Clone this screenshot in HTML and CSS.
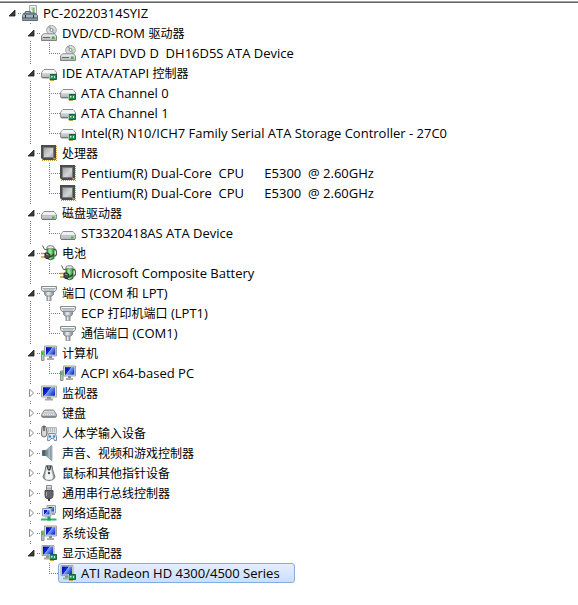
FILE: index.html
```
<!DOCTYPE html>
<html lang="zh-CN">
<head>
<meta charset="utf-8">
<title>设备管理器</title>
<link rel="stylesheet" href="styles.css">
</head>
<body>
<svg class="sprite" aria-hidden="true">
  <defs>
    <linearGradient id="metal" x1="0" y1="0" x2="0" y2="1"><stop offset="0" stop-color="#fafafa"/><stop offset="1" stop-color="#aaadb2"/></linearGradient>
    <linearGradient id="screenFill" x1="0" y1="0" x2="1" y2=".6"><stop offset="0" stop-color="#0008a0"/><stop offset=".48" stop-color="#1428d8"/><stop offset=".52" stop-color="#7ea6f4"/><stop offset="1" stop-color="#1838d8"/></linearGradient>
    <linearGradient id="chipFill" x1="0" y1="0" x2="1" y2="1"><stop offset="0" stop-color="#9c9ea0"/><stop offset=".6" stop-color="#d4d5d6"/><stop offset="1" stop-color="#a6a8aa"/></linearGradient>
    <linearGradient id="side" x1="0" y1="0" x2="1" y2="0"><stop offset="0" stop-color="#7d8288"/><stop offset=".4" stop-color="#eef0f2"/><stop offset="1" stop-color="#838990"/></linearGradient>
    <linearGradient id="cone" x1="0" y1="0" x2="1" y2="0"><stop offset="0" stop-color="#56707c"/><stop offset=".6" stop-color="#b4c2c9"/><stop offset="1" stop-color="#6c808a"/></linearGradient>
    <linearGradient id="green" x1="0" y1="0" x2="1" y2="0"><stop offset="0" stop-color="#22a82e"/><stop offset=".4" stop-color="#9cf59c"/><stop offset="1" stop-color="#1c9c28"/></linearGradient>
  </defs>
  <symbol id="open" viewBox="0 0 8 8"><path d="M7 1V7H1z" fill="#3c3c3c" stroke="#1c1c1c" stroke-width=".8"/></symbol>
  <symbol id="closed" viewBox="0 0 8 8"><path d="M2.500 .2V7.800L6.700 4z" fill="#fff" stroke="#8c8c8c" stroke-width="1"/></symbol>
  <symbol id="computer" viewBox="0 0 16 16">
    <path d="M7.500.5h7v9h-7z" fill="#eef1f2" stroke="#a4a9ac"/><path d="M9 2h4v3H9z" fill="#cfd6d8"/><path d="M10.500 3h2v5h-2z" fill="#7cc455"/>
    <path d="M3.500 8V6.500h5V8" fill="none" stroke="#56636c"/><path d="M2 8h11l2.500 2.500v5H.5v-5z" fill="#70838e" stroke="#5d6f78"/><path d="M1 10h14v2H1z" fill="#a7b7be"/><path d="M3 10h1v3H3zM11 10h1v3h-1z" fill="#28343a"/><path d="M1 14.500h14" stroke="#89989f"/>
  </symbol>
  <symbol id="drive" viewBox="0 0 16 16">
    <path d="M3 6.500h10l2.500 3.500v3.500l-1 1h-13l-1-1V10z" fill="url(#metal)" stroke="#8b8c91"/><path d="M3 7h10l1.800 3H1.200z" fill="#f0f0f2"/><path d="M1 10.500h14" stroke="#bcbec2"/><path d="M11 11.500h2.500v2H11z" fill="#37b928"/><path d="M1 14.500h14" stroke="#74757a"/>
  </symbol>
  <symbol id="optical" viewBox="0 0 16 16">
    <circle cx="10.500" cy="5.200" r="4.800" fill="#dcdde0" stroke="#a0a1a5"/><path d="M10.500 5L7 2l2-1.400zM10.500 5l3.700 3-1.700 1.300z" fill="#9da5ad"/><path d="M10.500 5l4-1.400v2.800z" fill="#b8dfb6"/><circle cx="10.500" cy="5" r="1.500" fill="#fff" stroke="#85868a"/>
    <path d="M2.500 8.800h11l2 2.200v4.500H.5V11z" fill="url(#metal)" stroke="#818287"/><path d="M2 12.500h7" stroke="#64656a"/><path d="M11 11.500h2.500V14H11z" fill="#37b928"/>
  </symbol>
  <symbol id="board" viewBox="0 0 16 16"><path d="M8.500 9.500h7v5h-7z" fill="#23905a" stroke="#17633f"/><path d="M10 11h1.500v1.500H10zM13 11h1v2h-1z" fill="#c9eed7"/><path d="M9 15.500h4" stroke="#c8a52c"/><path d="M8.500 9v6" stroke="#a9c4b4"/></symbol>
  <symbol id="ide" viewBox="0 0 16 16">
    <path d="M3 4.500h10l2.500 3v4.500l-1 1h-13l-1-1V7.500z" fill="url(#metal)" stroke="#8b8c91"/><path d="M3 5h10l2 3H1z" fill="#f4f4f5"/><path d="M1 12.500h8" stroke="#77797e"/><use href="#board"/>
  </symbol>
  <symbol id="chip" viewBox="0 0 16 16">
    <path d="M1 15.500h15M15.500 1v14" stroke="#c89b36" stroke-dasharray="1 1"/><path d="M0 0h15v15H2L0 13z" fill="#4a4c4d"/><path d="M2.500 2.500h10v10h-10z" fill="url(#chipFill)" stroke="#777b7d"/><path d="M12.500 13h2v1.500h-2z" fill="#e0ac3d"/>
  </symbol>
  <symbol id="battery" viewBox="0 0 16 16">
    <path d="M1.500 .5l2 4h3" fill="none" stroke="#5a5b5c"/><path d="M13 4.500h1.500l1 2v3l-2 2" fill="none" stroke="#50565a" stroke-width="1.300"/>
    <path d="M6 2.500q3.500-2.500 7 0v11q-3.500 2.500-7 0z" fill="url(#green)" stroke="#2c6d32"/><ellipse cx="9.500" cy="2.300" rx="3.500" ry="1.600" fill="#e8eaea" stroke="#888"/>
    <path d="M0 8.500h4M0 12h4" stroke="#cf9a24" stroke-width="1.300"/><path d="M4 8h3l2 1.500v2L7.500 13.500H5L4 12.500z" fill="#46494b" stroke="#26292a"/><path d="M5 9l2.500 1" stroke="#a1a7aa"/><path d="M9 12l2-1 2-2" fill="none" stroke="#3b3f41" stroke-width="1.500"/>
  </symbol>
  <symbol id="port" viewBox="0 0 16 16">
    <path d="M6 9.500h4v6.500H6z" fill="url(#side)" stroke="#92989b"/><path d="M3.500 6h9v3.500l-1.500 1.500H5L3.500 9.500z" fill="url(#side)" stroke="#899095"/><path d="M.5 1.500h15v3l-1.500 2H2L.5 4.500z" fill="#d7dcdf" stroke="#858d92"/><path d="M2 2.500h12" stroke="#f9fafa"/><path d="M2.500 3.500h11M3.500 5h9" stroke="#79838a" stroke-dasharray="1 1"/>
  </symbol>
  <symbol id="monitor" viewBox="0 0 16 16">
    <path d="M.5 1h15v11H.5z" fill="#dedfd8" stroke="#aaaba5"/><path d="M2 2.300h12v8.500H2z" fill="url(#screenFill)"/><path d="M6 12h4v2H6z" fill="#929791"/><path d="M4 14.500h8" stroke="#a6aaa5" stroke-width="2"/>
  </symbol>
  <symbol id="desktop" viewBox="0 0 16 16">
    <path d="M3.500 1h12v10h-12z" fill="#dedfd8" stroke="#9fa29f"/><path d="M5 2.200h9.300v7.500H5z" fill="url(#screenFill)"/><path d="M8 11h3v2H8z" fill="#888d8b"/><path d="M6 14h7" stroke="#a8ada9" stroke-width="2"/><path d="M.5 6h2.500v9.500H.5z" fill="#bdc5bf" stroke="#8a928b"/><path d="M1.500 7v3" stroke="#31c62b" stroke-width="1.500"/>
  </symbol>
  <symbol id="display" viewBox="0 0 16 16">
    <path d="M1 .5h12v10H1z" fill="#dedfd8" stroke="#a4a69f"/><path d="M2 1.500h10v8H2z" fill="url(#screenFill)"/><path d="M5 11h4v2H5z" fill="#8a908b"/><path d="M3 13.500h6" stroke="#a7aba6" stroke-width="2"/><use href="#board"/>
  </symbol>
  <symbol id="keyboard" viewBox="0 0 16 16">
    <path d="M3.500 5h9l3 4.500v2l-1 1h-13l-1-1v-2z" fill="#b9bdc3" stroke="#8a8e94"/><path d="M3.500 6.500h9M2.500 8h11M2 9.500h12" stroke="#f7f7f8" stroke-dasharray="1 1"/><path d="M1 11.500h14" stroke="#82868b"/>
  </symbol>
  <symbol id="hid" viewBox="0 0 16 16">
    <path d="M6 2.500h9.500v6H6z" fill="#dde0e3" stroke="#b2b7bc"/><path d="M7 4h8M7 6h8" stroke="#8a9199" stroke-dasharray="1 1"/><path d="M1 2q2-2.500 4 0l1 6q0 4-3 4T.500 8z" fill="#d9dbdd" stroke="#666b70"/><path d="M3 1v5" stroke="#404448" stroke-width="1.300"/>
    <path d="M7 10.500q0-2 2-2h4q2 0 2.500 3v4h-2l-1-2h-2.500l-1.500 2H6.500z" fill="#e8edf1" stroke="#7389a0"/><circle cx="9" cy="11.500" r="1.200" fill="#2787cc"/><circle cx="13" cy="11.500" r="1.200" fill="#2787cc"/>
  </symbol>
  <symbol id="speaker" viewBox="0 0 16 16">
    <path d="M1.500 5.500H5v5H1.500z" fill="#4c6470" stroke="#566b75"/><path d="M5 5.500L10.500 .5v15L5 10.500z" fill="url(#cone)" stroke="#8a9aa2"/><path d="M11 .5v15" stroke="#aab6bb"/>
  </symbol>
  <symbol id="mouse" viewBox="0 0 16 16">
    <path d="M5 .8q3-1 6 0l1 5.200 2 6q-1 3.500-6 3.500T2 12l2-6z" fill="url(#side)" stroke="#74797d"/><path d="M5.800 5L5 8l-1 4 1 2.500h6l1-2.500-1-4-.8-3L8 6z" fill="#f3f4f4"/><path d="M5.500 1l1 3.500L8 6l1.500-1.500 1-3.500z" fill="#3c4043"/><path d="M7.500 1h1v3h-1z" fill="#c7cbce"/><circle cx="8" cy="8" r="1.200" fill="#454a4e"/>
  </symbol>
  <symbol id="usb" viewBox="0 0 16 16">
    <path d="M5.500.500h5V6h-5z" fill="#e1e2e3" stroke="#85898c"/><path d="M7 2.500v2M9 2.500v2" stroke="#74787b"/><path d="M4 5.500h8v5q0 2.500-2 3H6q-2-.5-2-3z" fill="#62666a" stroke="#4b4f53"/><path d="M5.500 7v4" stroke="#a5a8aa"/><path d="M8 13v3" stroke="#3e4246" stroke-width="2"/>
  </symbol>
  <symbol id="network" viewBox="0 0 16 16">
    <path d="M6 .5h8.500v7.500H6z" fill="#dbe2e6" stroke="#91a0ab"/><path d="M7.500 2H13v4.500H7.500z" fill="url(#screenFill)"/><path d="M11 9h3" stroke="#a1a8ad" stroke-width="2"/><path d="M1.500 3.500h8.500v7.500H1.500z" fill="#dbe2e6" stroke="#91a0ab"/><path d="M3 5h5.500v4.500H3z" fill="url(#screenFill)"/><path d="M4 12h4" stroke="#a1a8ad"/><path d="M0 14.500h15.500" stroke="#3cad72" stroke-width="2"/><path d="M6.500 11.500h3v4h-3z" fill="#1f9c5b"/>
  </symbol>
</svg>
<main class="panel">
  <ul class="tree root">
    <li>
      <div class="row"><button class="toggle" aria-label="折叠"><svg><use href="#open"/></svg></button><span class="link"></span><span class="item"><svg class="icon"><use href="#computer"/></svg>PC-20220314SYIZ</span></div>
      <ul class="tree branch">
        <li>
          <div class="row"><button class="toggle" aria-label="折叠"><svg><use href="#open"/></svg></button><span class="link"></span><span class="item"><svg class="icon"><use href="#optical"/></svg>DVD/CD-ROM <span class="han">驱动器</span></span></div>
          <ul class="tree leaves">
            <li><div class="row"><span class="link"></span><span class="item"><svg class="icon"><use href="#optical"/></svg>ATAPI DVD D  DH16D5S ATA Device</span></div></li>
          </ul>
        </li>
        <li>
          <div class="row"><button class="toggle" aria-label="折叠"><svg><use href="#open"/></svg></button><span class="link"></span><span class="item"><svg class="icon"><use href="#ide"/></svg>IDE ATA/ATAPI <span class="han">控制器</span></span></div>
          <ul class="tree leaves">
            <li><div class="row"><span class="link"></span><span class="item"><svg class="icon"><use href="#ide"/></svg>ATA Channel 0</span></div></li>
            <li><div class="row"><span class="link"></span><span class="item"><svg class="icon"><use href="#ide"/></svg>ATA Channel 1</span></div></li>
            <li><div class="row"><span class="link"></span><span class="item"><svg class="icon"><use href="#ide"/></svg>Intel(R) N10/ICH7 Family Serial ATA Storage Controller - 27C0</span></div></li>
          </ul>
        </li>
        <li>
          <div class="row"><button class="toggle" aria-label="折叠"><svg><use href="#open"/></svg></button><span class="link"></span><span class="item"><svg class="icon"><use href="#chip"/></svg><span class="han">处理器</span></span></div>
          <ul class="tree leaves">
            <li><div class="row"><span class="link"></span><span class="item"><svg class="icon"><use href="#chip"/></svg>Pentium(R) Dual-Core  CPU      E5300  @ 2.60GHz</span></div></li>
            <li><div class="row"><span class="link"></span><span class="item"><svg class="icon"><use href="#chip"/></svg>Pentium(R) Dual-Core  CPU      E5300  @ 2.60GHz</span></div></li>
          </ul>
        </li>
        <li>
          <div class="row"><button class="toggle" aria-label="折叠"><svg><use href="#open"/></svg></button><span class="link"></span><span class="item"><svg class="icon"><use href="#drive"/></svg><span class="han">磁盘驱动器</span></span></div>
          <ul class="tree leaves">
            <li><div class="row"><span class="link"></span><span class="item"><svg class="icon"><use href="#drive"/></svg>ST3320418AS ATA Device</span></div></li>
          </ul>
        </li>
        <li>
          <div class="row"><button class="toggle" aria-label="折叠"><svg><use href="#open"/></svg></button><span class="link"></span><span class="item"><svg class="icon"><use href="#battery"/></svg><span class="han">电池</span></span></div>
          <ul class="tree leaves">
            <li><div class="row"><span class="link"></span><span class="item"><svg class="icon"><use href="#battery"/></svg>Microsoft Composite Battery</span></div></li>
          </ul>
        </li>
        <li>
          <div class="row"><button class="toggle" aria-label="折叠"><svg><use href="#open"/></svg></button><span class="link"></span><span class="item"><svg class="icon"><use href="#port"/></svg><span class="han">端口</span> (COM <span class="han">和</span> LPT)</span></div>
          <ul class="tree leaves">
            <li><div class="row"><span class="link"></span><span class="item"><svg class="icon"><use href="#port"/></svg>ECP <span class="han">打印机端口</span> (LPT1)</span></div></li>
            <li><div class="row"><span class="link"></span><span class="item"><svg class="icon"><use href="#port"/></svg><span class="han">通信端口</span> (COM1)</span></div></li>
          </ul>
        </li>
        <li>
          <div class="row"><button class="toggle" aria-label="折叠"><svg><use href="#open"/></svg></button><span class="link"></span><span class="item"><svg class="icon"><use href="#desktop"/></svg><span class="han">计算机</span></span></div>
          <ul class="tree leaves">
            <li><div class="row"><span class="link"></span><span class="item"><svg class="icon"><use href="#desktop"/></svg>ACPI x64-based PC</span></div></li>
          </ul>
        </li>
        <li><div class="row"><button class="toggle" aria-label="展开"><svg><use href="#closed"/></svg></button><span class="link"></span><span class="item"><svg class="icon"><use href="#monitor"/></svg><span class="han">监视器</span></span></div></li>
        <li><div class="row"><button class="toggle" aria-label="展开"><svg><use href="#closed"/></svg></button><span class="link"></span><span class="item"><svg class="icon"><use href="#keyboard"/></svg><span class="han">键盘</span></span></div></li>
        <li><div class="row"><button class="toggle" aria-label="展开"><svg><use href="#closed"/></svg></button><span class="link"></span><span class="item"><svg class="icon"><use href="#hid"/></svg><span class="han">人体学输入设备</span></span></div></li>
        <li><div class="row"><button class="toggle" aria-label="展开"><svg><use href="#closed"/></svg></button><span class="link"></span><span class="item"><svg class="icon"><use href="#speaker"/></svg><span class="han">声音、视频和游戏控制器</span></span></div></li>
        <li><div class="row"><button class="toggle" aria-label="展开"><svg><use href="#closed"/></svg></button><span class="link"></span><span class="item"><svg class="icon"><use href="#mouse"/></svg><span class="han">鼠标和其他指针设备</span></span></div></li>
        <li><div class="row"><button class="toggle" aria-label="展开"><svg><use href="#closed"/></svg></button><span class="link"></span><span class="item"><svg class="icon"><use href="#usb"/></svg><span class="han">通用串行总线控制器</span></span></div></li>
        <li><div class="row"><button class="toggle" aria-label="展开"><svg><use href="#closed"/></svg></button><span class="link"></span><span class="item"><svg class="icon"><use href="#network"/></svg><span class="han">网络适配器</span></span></div></li>
        <li><div class="row"><button class="toggle" aria-label="展开"><svg><use href="#closed"/></svg></button><span class="link"></span><span class="item"><svg class="icon"><use href="#desktop"/></svg><span class="han">系统设备</span></span></div></li>
        <li>
          <div class="row"><button class="toggle" aria-label="折叠"><svg><use href="#open"/></svg></button><span class="link"></span><span class="item"><svg class="icon"><use href="#display"/></svg><span class="han">显示适配器</span></span></div>
          <ul class="tree leaves">
            <li><div class="row"><span class="link"></span><span class="item selected"><svg class="icon"><use href="#display"/></svg>ATI Radeon HD 4300/4500 Series</span></div></li>
          </ul>
        </li>
      </ul>
    </li>
  </ul>
</main>
</body>
</html>
```
FILE: styles.css
```
* { box-sizing: border-box; }

body {
  margin: 0;
  background: #fff;
  color: #000;
  font: 13px/18px "Open Sans", "Noto Sans CJK SC", sans-serif;
}

.sprite {
  position: absolute;
  width: 0;
  height: 0;
}

.panel {
  margin-top: 1px;
  border-top: 1px solid #a0a0a0;
}

.root { border-top: 1px solid #696969; }

.tree {
  margin: 0;
  padding: 0;
  list-style: none;
}

.tree .tree { padding-left: 19px; }

/* Dotted guide that runs down the left of every nested level */
.tree .tree > li {
  background: repeating-linear-gradient(#808080 0 1px, transparent 1px 2px) 11px 0 / 1px 100% no-repeat;
}

.tree .tree > li:last-child { background-size: 1px 10px; }

.row {
  display: flex;
  align-items: center;
  height: 20px;
  padding-left: 8px;
}

.leaves .row { padding-left: 11px; }

.toggle {
  display: flex;
  align-items: center;
  flex: none;
  width: 10px;
  height: 16px;
  padding: 0;
  border: 0;
  background: #fff;
}

.toggle svg {
  width: 8px;
  height: 8px;
}

.link {
  flex: none;
  width: 4px;
  height: 1px;
  background: repeating-linear-gradient(90deg, #808080 0 1px, transparent 1px 2px);
}

.leaves .link { width: 11px; }

.item {
  display: flex;
  align-items: center;
  height: 20px;
  margin-left: -2px;
  padding: 0 14px 0 1px;
  border: 1px solid transparent;
  border-radius: 3px;
  white-space: pre;
}

.selected {
  border-color: #84acdd;
  background: linear-gradient(#e3effe, #c9dffc);
}

.icon {
  flex: none;
  width: 16px;
  height: 16px;
  margin-right: 5px;
}

.han {
  font-family: "Noto Sans CJK SC", sans-serif;
  font-size: 12px;
}
```
